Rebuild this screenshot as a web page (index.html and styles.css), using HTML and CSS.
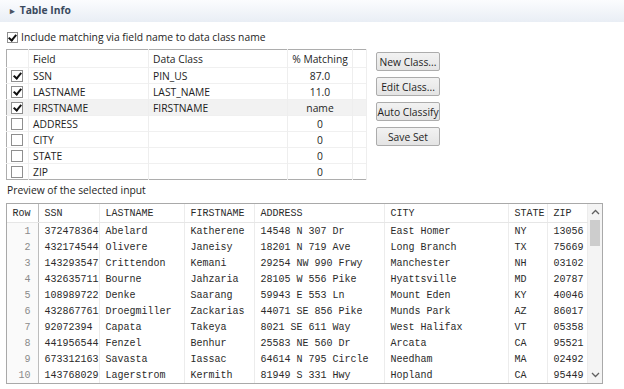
FILE: index.html
```html
<!DOCTYPE html>
<html lang="en">
<head>
    <meta charset="UTF-8">
    <title>Table Info</title>
    <link rel="stylesheet" href="styles.css">
</head>
<body>
    <div class="section-bar"><span class="twisty">&#9656;</span> Table Info</div>

    <label class="include"><span class="cb on"></span>Include matching via field name to data class name</label>

    <div class="top">
        <table class="fields">
            <colgroup>
                <col style="width:22px"><col style="width:120px"><col style="width:139px"><col style="width:65px"><col>
            </colgroup>
            <thead>
                <tr><th></th><th>Field</th><th>Data Class</th><th class="c-pct">% Matching</th><th></th></tr>
            </thead>
            <tbody>
                <tr><td class="c-cb"><span class="cb on"></span></td><td>SSN</td><td>PIN_US</td><td class="c-pct">87.0</td><td></td></tr>
                <tr><td class="c-cb"><span class="cb on"></span></td><td>LASTNAME</td><td>LAST_NAME</td><td class="c-pct">11.0</td><td></td></tr>
                <tr class="hover"><td class="c-cb"><span class="cb on"></span></td><td>FIRSTNAME</td><td>FIRSTNAME</td><td class="c-pct">name</td><td></td></tr>
                <tr><td class="c-cb"><span class="cb"></span></td><td>ADDRESS</td><td></td><td class="c-pct">0</td><td></td></tr>
                <tr><td class="c-cb"><span class="cb"></span></td><td>CITY</td><td></td><td class="c-pct">0</td><td></td></tr>
                <tr><td class="c-cb"><span class="cb"></span></td><td>STATE</td><td></td><td class="c-pct">0</td><td></td></tr>
                <tr><td class="c-cb"><span class="cb"></span></td><td>ZIP</td><td></td><td class="c-pct">0</td><td></td></tr>
            </tbody>
        </table>
        <div class="buttons">
            <button>New Class...</button>
            <button>Edit Class...</button>
            <button>Auto Classify</button>
            <button>Save Set</button>
        </div>
    </div>

    <div class="preview-label">Preview of the selected input</div>

    <div class="preview">
        <table class="data">
            <colgroup>
                <col style="width:31px"><col style="width:61px"><col style="width:85px"><col style="width:70px"><col style="width:130px"><col style="width:124px"><col style="width:39px"><col style="width:40px">
            </colgroup>
            <thead>
                <tr><th class="c-row">Row</th><th>SSN</th><th>LASTNAME</th><th>FIRSTNAME</th><th>ADDRESS</th><th>CITY</th><th>STATE</th><th>ZIP</th></tr>
            </thead>
            <tbody>
                <tr><td class="c-row">1</td><td>372478364</td><td>Abelard</td><td>Katherene</td><td>14548 N 307 Dr</td><td>East Homer</td><td>NY</td><td>13056</td></tr>
                <tr><td class="c-row">2</td><td>432174544</td><td>Olivere</td><td>Janeisy</td><td>18201 N 719 Ave</td><td>Long Branch</td><td>TX</td><td>75669</td></tr>
                <tr><td class="c-row">3</td><td>143293547</td><td>Crittendon</td><td>Kemani</td><td>29254 NW 990 Frwy</td><td>Manchester</td><td>NH</td><td>03102</td></tr>
                <tr><td class="c-row">4</td><td>432635711</td><td>Bourne</td><td>Jahzaria</td><td>28105 W 556 Pike</td><td>Hyattsville</td><td>MD</td><td>20787</td></tr>
                <tr><td class="c-row">5</td><td>108989722</td><td>Denke</td><td>Saarang</td><td>59943 E 553 Ln</td><td>Mount Eden</td><td>KY</td><td>40046</td></tr>
                <tr><td class="c-row">6</td><td>432867761</td><td>Droegmiller</td><td>Zackarias</td><td>44071 SE 856 Pike</td><td>Munds Park</td><td>AZ</td><td>86017</td></tr>
                <tr><td class="c-row">7</td><td>92072394</td><td>Capata</td><td>Takeya</td><td>8021 SE 611 Way</td><td>West Halifax</td><td>VT</td><td>05358</td></tr>
                <tr><td class="c-row">8</td><td>441956544</td><td>Fenzel</td><td>Benhur</td><td>25583 NE 560 Dr</td><td>Arcata</td><td>CA</td><td>95521</td></tr>
                <tr><td class="c-row">9</td><td>673312163</td><td>Savasta</td><td>Iassac</td><td>64614 N 795 Circle</td><td>Needham</td><td>MA</td><td>02492</td></tr>
                <tr><td class="c-row">10</td><td>143768029</td><td>Lagerstrom</td><td>Kermith</td><td>81949 S 331 Hwy</td><td>Hopland</td><td>CA</td><td>95449</td></tr>
            </tbody>
        </table>
        <div class="scrollbar">
            <svg class="arrow" width="9" height="6" viewBox="0 0 9 6"><path d="M1 5 L4.5 1.5 L8 5" fill="none" stroke="#606060" stroke-width="1.3"/></svg>
            <div class="track"><div class="thumb"></div></div>
            <svg class="arrow" width="9" height="6" viewBox="0 0 9 6"><path d="M1 1 L4.5 4.5 L8 1" fill="none" stroke="#606060" stroke-width="1.3"/></svg>
        </div>
    </div>
</body>
</html>
```

FILE: styles.css
```css
body {
    margin: 0;
    width: 624px;
    height: 389px;
    overflow: hidden;
    background: #fff;
    font-family: "Open Sans", "Noto Sans", sans-serif;
    font-size: 10.3px;
    color: #1e1e1e;
}

.section-bar {
    height: 22px;
    line-height: 21px;
    padding-left: 10px;
    background: linear-gradient(#fbfcfe, #e9eef5);
    font-weight: bold;
    color: #3a4a5e;
}

.twisty {
    font-size: 9px;
    color: #4b5563;
    margin-right: 2px;
}

.include {
    display: flex;
    align-items: center;
    height: 16px;
    margin: 7px 0 0 7px;
}

.cb {
    display: inline-block;
    width: 11px;
    height: 11px;
    border: 1px solid #8f8f8f;
    background: #fff;
    box-sizing: border-box;
    margin-right: 3px;
    position: relative;
}

.cb.on::after {
    content: "";
    position: absolute;
    left: 2px;
    top: 0;
    width: 3px;
    height: 6px;
    border: solid #111;
    border-width: 0 2px 2px 0;
    transform: rotate(40deg);
}

.top {
    display: flex;
    margin: 4px 0 0 6px;
}

table {
    border-collapse: collapse;
    table-layout: fixed;
}

.fields {
    width: 361px;
    border: 1px solid #adadad;
}

.fields th {
    height: 17px;
    font-weight: normal;
    text-align: left;
    padding: 0 0 0 4px;
    border-right: 1px solid #eeeeee;
}

.fields td {
    height: 15px;
    padding: 0 0 0 4px;
    border-top: 1px solid #f0f0f0;
    border-right: 1px solid #eeeeee;
    white-space: nowrap;
    overflow: hidden;
}

.fields .c-pct { text-align: center; padding: 0; }
.fields td.c-cb { padding-left: 4px; }
.fields td .cb { display: block; margin: 0; width: 12px; height: 12px; }
.fields td .cb.on::after { left: 3px; top: 0; }

.fields tr.hover td {
    background: #f2f2f2;
}

.buttons {
    display: flex;
    flex-direction: column;
    gap: 6px;
    margin-left: 9px;
    margin-top: 3px;
}

.buttons button {
    width: 64px;
    height: 19px;
    padding: 0;
    white-space: nowrap;
    font-family: inherit;
    font-size: 10.3px;
    color: #1e1e1e;
    border: 1px solid #acacac;
    border-radius: 2px;
    background: linear-gradient(#f2f2f2, #e4e4e4);
}

.preview-label {
    margin: 2px 0 0 7px;
    height: 16px;
    line-height: 16px;
}

.preview {
    display: flex;
    width: 595px;
    height: 179px;
    margin: 5px 0 0 6px;
    border: 1px solid #a9a9a9;
    overflow: hidden;
}

.data {
    width: 580px;
    flex-shrink: 0;
    font-family: "Liberation Mono", "Courier New", monospace;
    font-size: 10px;
    color: #2a2a2a;
}

.data th {
    height: 18px;
    font-weight: normal;
    text-align: left;
    padding: 0 0 0 6px;
    border-right: 1px solid #ececec;
    border-bottom: 1px solid #e6e6e6;
}

.data td {
    height: 16px;
    padding: 0 0 0 6px;
    white-space: nowrap;
    overflow: hidden;
    border-right: 1px solid #ececec;
}

.data .c-row {
    padding: 0 7px 0 0;
    text-align: right;
    border-right: 1px solid #bdbdbd;
}

.data td.c-row { color: #8a8a8a; background: #fafafa; }

.scrollbar {
    width: 15px;
    flex-shrink: 0;
    display: flex;
    flex-direction: column;
    align-items: center;
    background: #f4f4f4;
}

.arrow {
    margin: 5px 0;
}

.track {
    flex: 1;
    width: 100%;
    display: flex;
    justify-content: center;
}

.thumb {
    width: 10px;
    height: 26px;
    background: #cdcdcd;
}
```
